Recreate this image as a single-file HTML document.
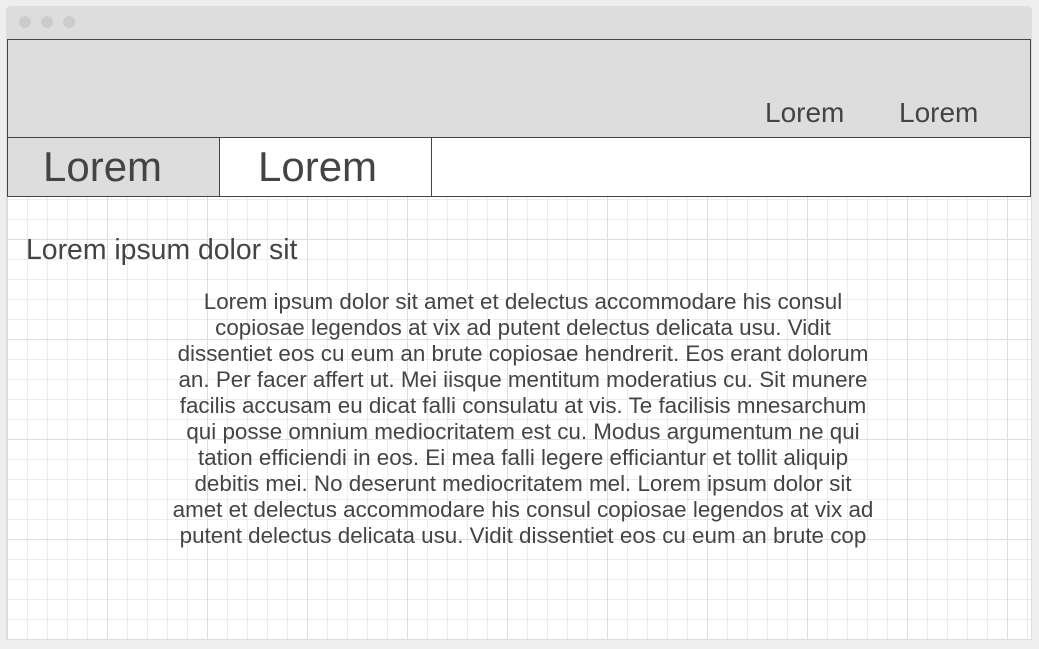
<!DOCTYPE html>
<html><head><style>
body{margin:0;width:1039px;height:649px;background:#eeeeee;font-family:"Liberation Sans",sans-serif;color:#444;position:relative;overflow:hidden}
.win{position:absolute;left:6px;top:6px;width:1026px;height:634px;background:#dddddd;border-radius:5px 5px 0 0}
.dot{position:absolute;top:10px;width:12px;height:12px;border-radius:50%;background:#cccccc}
.content{position:absolute;left:7px;top:196px;width:1024px;height:443px;background-color:#fff;
background-image:linear-gradient(to right,#dedede 1px,transparent 1px),linear-gradient(to bottom,#dedede 1px,transparent 1px),linear-gradient(to right,#ececec 1px,transparent 1px),linear-gradient(to bottom,#ececec 1px,transparent 1px);
background-size:100px 100px,100px 100px,20px 20px,20px 20px;background-position:0 -57px,0 -57px,0 3px,0 3px}
.hdr{position:absolute;left:7px;top:39px;width:1022px;height:97px;border:1px solid #444;background:#ddd}
.tabs{position:absolute;left:7px;top:137px;width:1022px;height:58px;border:1px solid #444;background:#fff}
.tab{position:absolute;top:0;height:58px;width:211px;border-right:1px solid #444;font-size:42px;line-height:58px;padding-left:35px;box-sizing:border-box}
.nav{position:absolute;top:97px;font-size:28px}
h2{position:absolute;left:26px;top:234px;margin:0;font-weight:normal;font-size:28.4px}
p{position:absolute;left:123px;top:289px;width:800px;margin:0;text-align:center;font-size:22.4px;line-height:26px;white-space:nowrap}
</style></head><body>
<div class="win">
<div class="dot" style="left:13px"></div><div class="dot" style="left:35px"></div><div class="dot" style="left:57px"></div>
</div>
<div class="content"></div>
<div class="hdr"></div>
<span class="nav" style="left:765px">Lorem</span><span class="nav" style="left:899px">Lorem</span>
<div class="tabs">
<div class="tab" style="left:0;background:#ddd;width:212px">Lorem</div>
<div class="tab" style="left:212px;padding-left:38px;width:212px">Lorem</div>
</div>
<h2>Lorem ipsum dolor sit</h2>
<p>Lorem ipsum dolor sit amet et delectus accommodare his consul<br>copiosae legendos at vix ad putent delectus delicata usu. Vidit<br>dissentiet eos cu eum an brute copiosae hendrerit. Eos erant dolorum<br>an. Per facer affert ut. Mei iisque mentitum moderatius cu. Sit munere<br>facilis accusam eu dicat falli consulatu at vis. Te facilisis mnesarchum<br>qui posse omnium mediocritatem est cu. Modus argumentum ne qui<br>tation efficiendi in eos. Ei mea falli legere efficiantur et tollit aliquip<br>debitis mei. No deserunt mediocritatem mel. Lorem ipsum dolor sit<br>amet et delectus accommodare his consul copiosae legendos at vix ad<br>putent delectus delicata usu. Vidit dissentiet eos cu eum an brute cop</p>
</body></html>
